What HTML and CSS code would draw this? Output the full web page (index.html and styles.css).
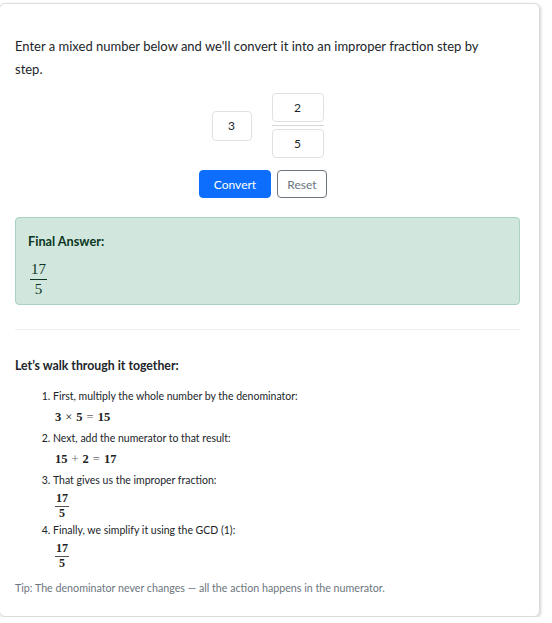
FILE: index.html
```html
<!DOCTYPE html>
<html lang="en">
<head>
<meta charset="utf-8">
<title>Mixed Number to Improper Fraction</title>
<link rel="stylesheet" href="styles.css">
</head>
<body>
<div class="card">
  <p class="intro">Enter a mixed number below and we'll convert it into an improper fraction step by step.</p>

  <div class="mixed">
    <input class="inp whole" type="text" value="3">
    <div class="frac-inputs">
      <input class="inp part" type="text" value="2">
      <div class="frac-bar"></div>
      <input class="inp part" type="text" value="5">
    </div>
  </div>

  <div class="actions">
    <button class="btn btn-primary">Convert</button>
    <button class="btn btn-outline">Reset</button>
  </div>

  <div class="alert">
    <div class="alert-title">Final Answer:</div>
    <span class="frac frac-lg"><span class="num">17</span><span class="den">5</span></span>
  </div>

  <hr class="divider">

  <h3 class="walk">Let’s walk through it together:</h3>

  <ol class="steps">
    <li>First, multiply the whole number by the denominator:
      <div class="math">3<span class="op">×</span>5<span class="op light">=</span>15</div>
    </li>
    <li>Next, add the numerator to that result:
      <div class="math">15<span class="op light">+</span>2<span class="op light">=</span>17</div>
    </li>
    <li>That gives us the improper fraction:
      <div class="math"><span class="frac frac-sm"><span class="num">17</span><span class="den">5</span></span></div>
    </li>
    <li>Finally, we simplify it using the GCD (1):
      <div class="math"><span class="frac frac-sm"><span class="num">17</span><span class="den">5</span></span></div>
    </li>
  </ol>

  <p class="tip">Tip: The denominator never changes — all the action happens in the numerator.</p>
</div>
</body>
</html>
```
FILE: styles.css
```css
html, body {
  margin: 0;
  padding: 0;
  background: #ffffff;
}

body {
  font-family: Lato, "Open Sans", sans-serif;
  color: #212529;
}

.card {
  margin: 3px 0 0 -1px;
  width: 505px;
  padding: 31px 19px 20px 15px;
  border: 1px solid #dcdcdc;
  border-radius: 6px;
  box-shadow: 1px 1px 3px rgba(0, 0, 0, 0.18);
  background: #fff;
}

.intro {
  margin: 0 0 12px;
  max-width: 488px;
  font-size: 13px;
  line-height: 23px;
}

.mixed {
  display: flex;
  align-items: center;
  justify-content: center;
  gap: 20px;
}

.inp {
  box-sizing: border-box;
  border: 1px solid #dee2e6;
  border-radius: 4px;
  background: #fff;
  font-family: Lato, sans-serif;
  font-size: 12px;
  color: #212529;
  text-align: center;
  padding: 0;
  outline: none;
}

.whole {
  width: 40px;
  height: 30px;
}

.frac-inputs {
  display: flex;
  flex-direction: column;
  gap: 3px;
}

.part {
  width: 52px;
  height: 29px;
}

.frac-bar {
  height: 1px;
  background: #d6d8da;
}

.actions {
  display: flex;
  justify-content: center;
  gap: 6px;
  margin-top: 12px;
  padding-right: 9px;
}

.btn {
  box-sizing: border-box;
  height: 28px;
  border-radius: 4px;
  font-family: Lato, sans-serif;
  font-size: 12px;
  cursor: pointer;
}

.btn-primary {
  width: 72px;
  background: #0d6efd;
  border: 1px solid #0d6efd;
  color: #fff;
}

.btn-outline {
  width: 50px;
  background: #fff;
  border: 1px solid #6c757d;
  color: #6c757d;
}

.alert {
  margin-top: 19px;
  padding: 13px 12px 7px;
  background: #d1e7dd;
  border: 1px solid #a9d3bf;
  border-radius: 4px;
  color: #0a3622;
}

.alert-title {
  font-weight: 700;
  font-size: 12.7px;
  line-height: 20px;
  margin-bottom: 7px;
}

.frac {
  display: inline-flex;
  flex-direction: column;
  align-items: stretch;
  text-align: center;
  font-family: "Liberation Serif", "DejaVu Serif", serif;
}

.frac .num {
  border-bottom: 1px solid currentColor;
}

.frac-lg {
  margin-left: 2px;
  font-size: 15px;
}

.frac-lg .num {
  line-height: 15px;
  padding: 0 1px 2px;
}

.frac-lg .den {
  line-height: 15px;
  padding-top: 2px;
}

.divider {
  margin: 24px 0 0;
  border: 0;
  border-top: 1px solid #eeeff0;
  height: 0;
}

.walk {
  margin: 26px 0 0;
  font-size: 12.3px;
  line-height: 20px;
  font-weight: 700;
}

.steps {
  margin: 10px 0 0;
  padding-left: 38px;
  font-size: 10.5px;
  line-height: 21px;
  color: #212529;
}

.math {
  margin-left: 2px;
  font-family: "Liberation Serif", "DejaVu Serif", serif;
  font-size: 12.5px;
  font-weight: 700;
  line-height: 21px;
  color: #222;
}

.math .op {
  padding: 0 4px;
  font-weight: 400;
}

.math .light {
  color: #666;
}

.frac-sm {
  vertical-align: top;
  font-size: 12px;
}

.frac-sm .num {
  line-height: 13px;
  padding: 1px 1px 1px;
  border-bottom-color: #555;
}

.frac-sm .den {
  line-height: 13px;
}

.tip {
  margin: 10px 0 0;
  font-size: 10.7px;
  line-height: 16px;
  color: #6c757d;
}
```
